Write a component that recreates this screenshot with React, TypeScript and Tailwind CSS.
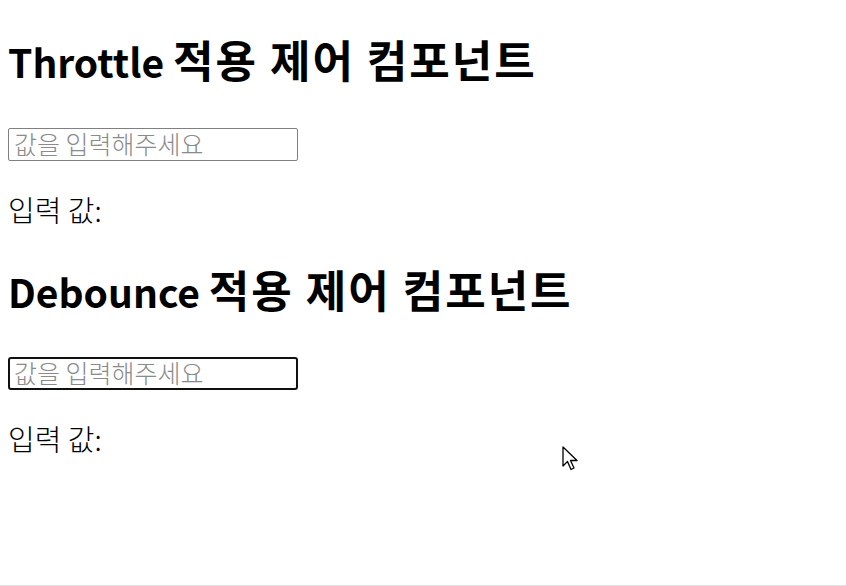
import { useState } from "react";

const font = { fontFamily: '"Noto Sans CJK KR", "Noto Sans", sans-serif' };

function ControlBlock({ latin, focused }: { latin: string; focused?: boolean }) {
  const [value, setValue] = useState("");
  return (
    <section>
      <h2
        className={
          focused
            ? "mt-[39px] whitespace-nowrap text-[39px] font-bold leading-[50px] text-black"
            : "mt-[36px] whitespace-nowrap text-[39px] font-bold leading-[50px] text-black"
        }
      >
        {latin}{" "}
        <span className="text-[44px] font-semibold leading-none tracking-[2px]">적용 제어 컴포넌트</span>
      </h2>
      <input
        value={value}
        onChange={(e) => setValue(e.target.value)}
        placeholder="값을 입력해주세요"
        className={
          focused
            ? "mt-[41px] block h-[33px] w-[290px] rounded-[3px] border-2 border-[#101010] bg-white px-[4px] pb-[3px] text-[25px] font-light leading-none text-black outline-none placeholder:text-[#8a8a8a]"
            : "mt-[42px] block h-[33px] w-[290px] rounded-[2px] border border-[#808080] bg-white px-[5px] pb-[3px] text-[25px] font-light leading-none text-black outline-none placeholder:text-[#8a8a8a]"
        }
      />
      <p className="mt-[30px] text-[29px] font-light leading-[36px] text-black">입력 값: {value}</p>
    </section>
  );
}

export default function App() {
  return (
    <div
      style={font}
      className="relative h-[586px] w-[846px] overflow-hidden border-b border-[#e0e0e0] bg-white px-2"
    >
      <ControlBlock latin="Throttle" />
      <ControlBlock latin="Debounce" focused />

      {/* mouse pointer captured in the screenshot */}
      <svg
        className="pointer-events-none absolute left-[562px] top-[446px]"
        width="18"
        height="28"
        viewBox="0 0 18 28"
      >
        <path
          d="M1 1 L1 20 L5.5 15.5 L9 23.5 L12 22 L8.5 14.5 L15 14.5 Z"
          fill="white"
          stroke="black"
          strokeWidth="1.3"
          strokeLinejoin="round"
        />
      </svg>
    </div>
  );
}
